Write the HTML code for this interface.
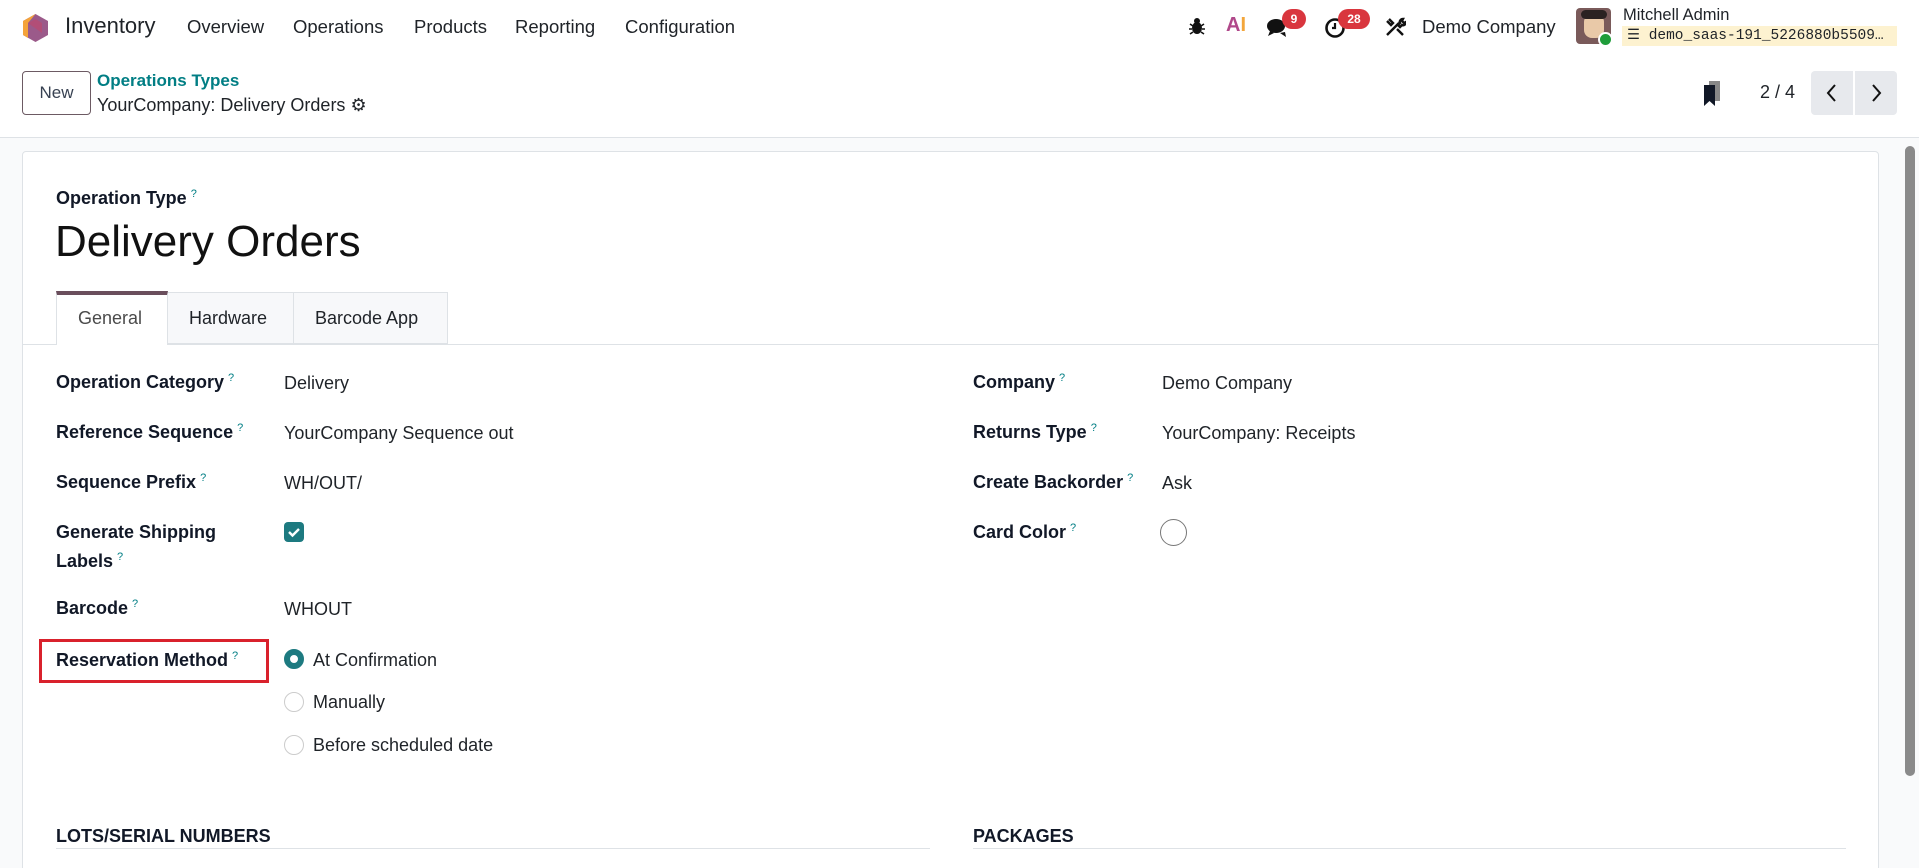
<!DOCTYPE html>
<html><head><meta charset="utf-8"><style>
*{box-sizing:border-box;margin:0;padding:0}
html{width:1919px;height:868px;overflow:hidden}
body{width:1919px;height:868px;overflow:hidden;font-family:"Liberation Sans",sans-serif;color:#212529;background:#f9fafb;position:relative}
.a{position:absolute;white-space:nowrap}
.nav{position:absolute;left:0;top:0;width:1919px;height:55px;background:#fff}
.cp{position:absolute;left:0;top:55px;width:1919px;height:83px;background:#fff;border-bottom:1px solid #dee2e6}
.m{font-size:18.5px;top:16px;color:#1f2328}
.lbl{font-weight:bold;font-size:18px;color:#111827}
.lbl sup{color:#017e84;font-size:11px;font-weight:normal;margin-left:4px}
.val{font-size:18px;color:#1f2328}
.card{position:absolute;left:22px;top:151px;width:1857px;height:760px;background:#fff;border:1px solid #dee2e6;border-radius:4px}
.radio{position:absolute;width:20px;height:20px;border-radius:50%;border:1px solid #ccc;background:#fff}
</style></head><body>
<div class="nav">
 <svg class="a" style="left:22px;top:13px" width="27" height="30" viewBox="0 0 27 30"><polygon points="13.5,1 26,8 26,22 13.5,29 1,22 1,8" fill="#9b5a8a"/><polygon points="13.5,1 1,8 1,22 6,25 6,10" fill="#f4a33a"/><polygon points="6,10 13.5,6 20,10 20,20" fill="#c2466a" opacity=".6"/></svg>
 <div class="a" style="left:65px;top:13px;font-size:22px;color:#1f2328">Inventory</div>
 <div class="a m" style="left:187px">Overview</div>
 <div class="a m" style="left:293px">Operations</div>
 <div class="a m" style="left:414px">Products</div>
 <div class="a m" style="left:515px">Reporting</div>
 <div class="a m" style="left:625px">Configuration</div>
 <svg class="a" style="left:1189px;top:17px" width="16" height="18" viewBox="0 0 16 18"><ellipse cx="8" cy="11" rx="5" ry="6" fill="#111"/><circle cx="8" cy="4" r="3" fill="#111"/><path d="M1 7l3 2M15 7l-3 2M0 12h3M16 12h-3M1 17l3-2M15 17l-3-2" stroke="#111" stroke-width="1.6"/></svg>
 <div class="a" style="left:1226px;top:14px;font-size:20px;font-weight:bold;color:#f3a63b"><span style="color:#b0488a">A</span>I</div>
 <svg class="a" style="left:1266px;top:17px" width="24" height="22" viewBox="0 0 24 22"><ellipse cx="10" cy="9" rx="9" ry="7" fill="#111"/><path d="M4 14l-2 5 6-3z" fill="#111"/><path d="M14 16l6 4-1-5" fill="#111"/></svg>
 <div class="a" style="left:1282px;top:9px;width:24px;height:20px;border-radius:10px;background:#d9363e;color:#fff;font-size:12px;font-weight:bold;text-align:center;line-height:20px">9</div>
 <svg class="a" style="left:1324px;top:17px" width="22" height="22" viewBox="0 0 22 22"><circle cx="11" cy="11" r="8.5" fill="none" stroke="#111" stroke-width="2.6"/><path d="M11 6v5h-3" stroke="#111" stroke-width="2.2" fill="none"/></svg>
 <div class="a" style="left:1338px;top:9px;width:32px;height:20px;border-radius:10px;background:#d9363e;color:#fff;font-size:12px;font-weight:bold;text-align:center;line-height:20px">28</div>
 <svg class="a" style="left:1384px;top:16px" width="22" height="22" viewBox="0 0 22 22"><path d="M3 19L15 7M5 3l4 4-2 2-4-4M13 13l6 6M19 3c-2 0-4 2-3 4l-2 2 2 2 2-2c2 1 4-1 4-3l-2 1-2-2z" stroke="#111" stroke-width="2.4" fill="none"/></svg>
 <div class="a" style="left:1422px;top:16px;font-size:18.5px;color:#1f2328">Demo Company</div>
 <div class="a" style="left:1576px;top:8px;width:35px;height:36px;border-radius:4px;background:#7a5a5a;overflow:hidden"><div style="position:absolute;left:8px;top:6px;width:20px;height:24px;background:#e9c9a8;border-radius:8px"></div><div style="position:absolute;left:5px;top:2px;width:26px;height:9px;background:#2b2222;border-radius:6px"></div></div>
 <div class="a" style="left:1598px;top:32px;width:15px;height:15px;border-radius:50%;background:#1f9d3a;border:2px solid #fff"></div>
 <div class="a" style="left:1623px;top:6px;font-size:16.5px;color:#1f2328">Mitchell Admin</div>
 <div class="a" style="left:1622px;top:26px;width:275px;height:20px;background:#fdf2d0"></div>
 <div class="a" style="left:1627px;top:27px;font-size:14.5px;font-family:'Liberation Mono',monospace;color:#1f2328">&#9776; demo_saas-191_5226880b5509…</div>
</div>
<div class="cp">
 <div class="a" style="left:22px;top:16px;width:69px;height:44px;border:1px solid #6c5a63;border-radius:4px;font-size:17px;text-align:center;line-height:42px;color:#374151">New</div>
 <div class="a" style="left:97px;top:16px;font-size:17px;font-weight:bold;color:#017e84">Operations Types</div>
 <div class="a" style="left:97px;top:40px;font-size:18px;color:#1f2328">YourCompany: Delivery Orders <span style="font-size:18px">&#9881;</span></div>
 <svg class="a" style="left:1702px;top:26px" width="20" height="26" viewBox="0 0 20 26"><rect x="7" y="0" width="11" height="20" fill="#888"/><path d="M2 4h11v21l-5.5-5-5.5 5z" fill="#111827"/></svg>
 <div class="a" style="left:1760px;top:27px;font-size:18px;color:#1f2328">2 / 4</div>
 <div class="a" style="left:1811px;top:16px;width:42px;height:44px;background:#e7e9ed;border-radius:4px 0 0 4px"></div>
 <div class="a" style="left:1855px;top:16px;width:42px;height:44px;background:#e7e9ed;border-radius:0 4px 4px 0"></div>
 <svg class="a" style="left:1824px;top:28px" width="16" height="20"><path d="M11 2L4 10l7 8" stroke="#111" stroke-width="2" fill="none"/></svg>
 <svg class="a" style="left:1868px;top:28px" width="16" height="20"><path d="M5 2l7 8-7 8" stroke="#111" stroke-width="2" fill="none"/></svg>
</div>
<div class="a" style="left:1905px;top:146px;width:10px;height:630px;background:#8a8a8a;border-radius:5px"></div>
<div class="card"></div>
<div class="a lbl" style="left:56px;top:188px">Operation Type<sup>?</sup></div>
<div class="a" style="left:55px;top:217px;font-size:44px;color:#111">Delivery Orders</div>
<div class="a" style="left:22px;top:344px;width:1857px;height:1px;background:#dee2e6"></div>
<div class="a" style="left:56px;top:291px;width:112px;height:54px;background:#fff;border-left:1px solid #dee2e6;border-right:1px solid #dee2e6;border-top:4px solid #6a4e5c"></div>
<div class="a" style="left:168px;top:292px;width:126px;height:52px;background:#f7f8fa;border:1px solid #dee2e6;border-left:none"></div>
<div class="a" style="left:294px;top:292px;width:154px;height:52px;background:#f7f8fa;border:1px solid #dee2e6;border-left:none"></div>
<div class="a" style="left:78px;top:308px;font-size:18px;color:#4b4b4b">General</div>
<div class="a" style="left:189px;top:308px;font-size:18px;color:#1f2328">Hardware</div>
<div class="a" style="left:315px;top:308px;font-size:18px;color:#1f2328">Barcode App</div>

<div class="a lbl" style="left:56px;top:372px">Operation Category<sup>?</sup></div><div class="a val" style="left:284px;top:373px">Delivery</div>
<div class="a lbl" style="left:56px;top:422px">Reference Sequence<sup>?</sup></div><div class="a val" style="left:284px;top:423px">YourCompany Sequence out</div>
<div class="a lbl" style="left:56px;top:472px">Sequence Prefix<sup>?</sup></div><div class="a val" style="left:284px;top:473px">WH/OUT/</div>
<div class="a lbl" style="left:56px;top:522px">Generate Shipping</div>
<div class="a lbl" style="left:56px;top:551px">Labels<sup>?</sup></div>
<div class="a" style="left:284px;top:522px;width:20px;height:20px;border-radius:4px;background:#1d7a80"><svg width="20" height="20"><path d="M5 10l3.5 3.5L15 7" stroke="#fff" stroke-width="2.4" fill="none"/></svg></div>
<div class="a lbl" style="left:56px;top:598px">Barcode<sup>?</sup></div><div class="a val" style="left:284px;top:599px">WHOUT</div>
<div class="a lbl" style="left:56px;top:650px">Reservation Method<sup>?</sup></div>
<div class="a" style="left:39px;top:639px;width:230px;height:44px;border:3px solid #d9212c"></div>
<div class="radio" style="left:284px;top:649px;border:6px solid #1d7a80"></div><div class="a val" style="left:313px;top:650px">At Confirmation</div>
<div class="radio" style="left:284px;top:692px"></div><div class="a val" style="left:313px;top:692px">Manually</div>
<div class="radio" style="left:284px;top:735px"></div><div class="a val" style="left:313px;top:735px">Before scheduled date</div>

<div class="a lbl" style="left:973px;top:372px">Company<sup>?</sup></div><div class="a val" style="left:1162px;top:373px">Demo Company</div>
<div class="a lbl" style="left:973px;top:422px">Returns Type<sup>?</sup></div><div class="a val" style="left:1162px;top:423px">YourCompany: Receipts</div>
<div class="a lbl" style="left:973px;top:472px">Create Backorder<sup>?</sup></div><div class="a val" style="left:1162px;top:473px">Ask</div>
<div class="a lbl" style="left:973px;top:522px">Card Color<sup>?</sup></div>
<div class="a" style="left:1160px;top:519px;width:27px;height:27px;border-radius:50%;border:1.5px solid #777;background:#fff"></div>

<div class="a lbl" style="left:56px;top:826px">LOTS/SERIAL NUMBERS</div>
<div class="a" style="left:56px;top:848px;width:874px;height:1px;background:#dee2e6"></div>
<div class="a lbl" style="left:973px;top:826px">PACKAGES</div>
<div class="a" style="left:973px;top:848px;width:873px;height:1px;background:#dee2e6"></div>
</body></html>
